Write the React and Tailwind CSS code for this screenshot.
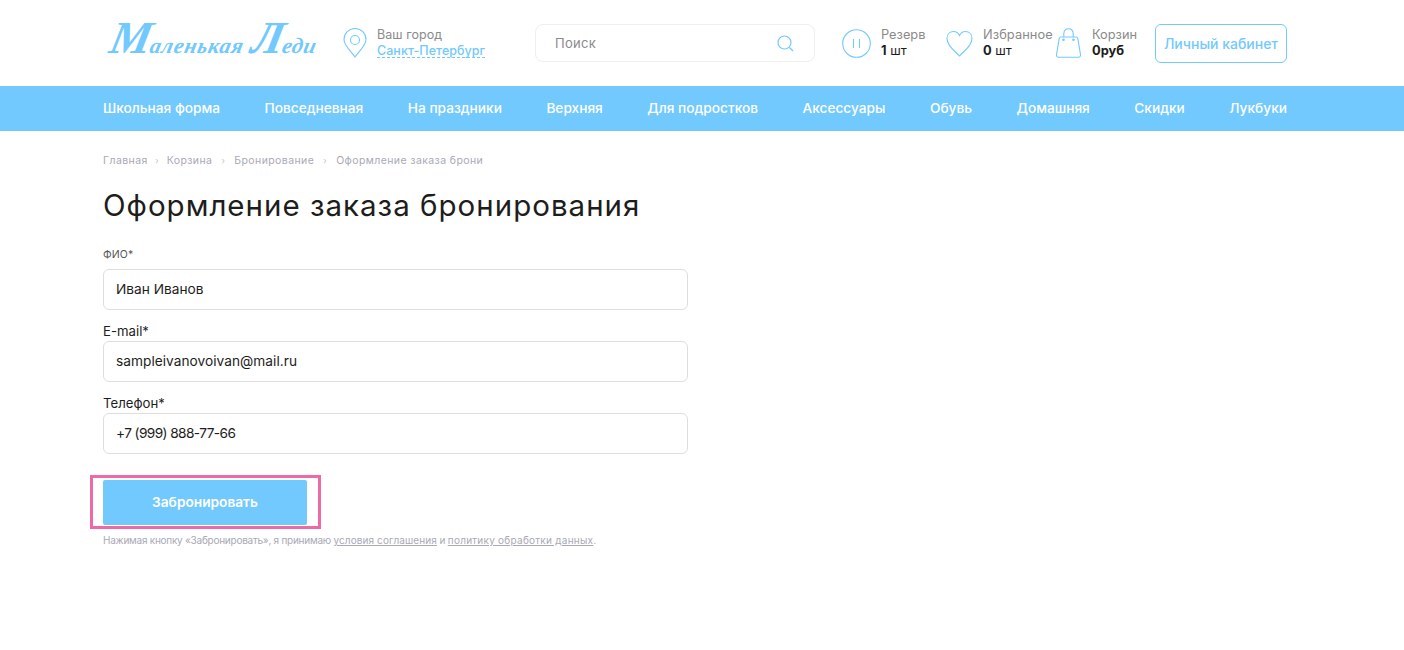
export default function App() {
  const nav = ["Школьная форма","Повседневная","На праздники","Верхняя","Для подростков","Аксессуары","Обувь","Домашняя","Скидки","Лукбуки"];
  const crumbs = ["Главная","Корзина","Бронирование","Оформление заказа брони"];
  const fields = [
    { label: "E-mail*", value: "sampleivanovoivan@mail.ru", track: "tracking-[0.03px]" },
    { label: "Телефон*", value: "+7 (999) 888-77-66", track: "tracking-[-0.6px]" },
  ];
  return (
    <div className="min-h-[650px] bg-white font-['Inter','Noto_Sans',sans-serif] text-[#1d1d1b]">
      <header className="h-[86px] w-[1184px] mx-[103px] flex items-center relative">
        <div className="w-[240px] pl-[7px] flex items-center">
          <span className="inline-block font-['Liberation_Serif',serif] italic text-[#72c9fd] font-bold whitespace-nowrap -skew-x-12 leading-[40px]">
            <span className="text-[46px]">М</span>
            <span className="text-[22px] tracking-[0.8px]">аленькая</span>
            <span className="text-[46px] ml-[7px]">Л</span>
            <span className="text-[22px] tracking-[0.6px]">еди</span>
          </span>
        </div>
        <svg className="w-[24px] h-[30px] shrink-0" viewBox="0 0 24 30" fill="none" stroke="#72c9fd" strokeWidth="1.1">
          <path d="M12 29 C9 24 1 18 1 11.5 A11 11 0 0 1 23 11.5 C23 18 15 24 12 29 Z" />
          <circle cx="12" cy="12" r="4.5" />
        </svg>
        <div className="ml-[10px] w-[158px] pt-[3px] pb-[1px] text-[12.5px] tracking-[0.05px]">
          <div className="text-[#8a8a8a] leading-[18px]">Ваш город</div>
          <div className="inline-block align-top text-[#72c9fd] font-medium leading-[13px] border-b border-dashed border-[#72c9fd]">Санкт-Петербург</div>
        </div>
        <div className="w-[280px] h-[38px] rounded-[8px] border border-[#efefef] flex items-center justify-between pl-[19px] pr-[20px] text-[13px] text-[#8a8a8a] tracking-[0.3px]">
          <span className="pt-[2px]">Поиск</span>
          <svg className="w-[17px] h-[17px]" viewBox="0 0 17 17" fill="none" stroke="#72c9fd" strokeWidth="1.2">
            <circle cx="7.5" cy="7.5" r="6.5" />
            <path d="M12.5 12.5 L16 16" />
          </svg>
        </div>
        <svg className="ml-[27px] w-[29px] h-[29px] shrink-0" viewBox="0 0 29 29" fill="none" stroke="#72c9fd" strokeWidth="1.1">
          <circle cx="14.5" cy="14.5" r="13.8" />
          <path d="M11.5 10 V19 M17.5 10 V19" />
        </svg>
        <div className="ml-[10px] w-[65px] text-[12.8px] leading-[16px]">
          <div className="text-[#8a8a8a]">Резерв</div>
          <div><b className="font-bold">1</b> шт</div>
        </div>
        <svg className="w-[27px] h-[27px] shrink-0" viewBox="0 0 27 27" fill="none" stroke="#72c9fd" strokeWidth="1.1">
          <path d="M13.5 26 C9 21 1 16 1 8.5 C1 4 4 1.5 7.5 1.5 C10 1.5 12.3 3 13.5 5.5 C14.7 3 17 1.5 19.5 1.5 C23 1.5 26 4 26 8.5 C26 16 18 21 13.5 26 Z" />
        </svg>
        <div className="ml-[10px] w-[73px] text-[12.8px] leading-[16px]">
          <div className="text-[#8a8a8a] whitespace-nowrap tracking-[0.1px]">Избранное</div>
          <div><b className="font-bold">0</b> шт</div>
        </div>
        <svg className="w-[25px] h-[30px] shrink-0" viewBox="0 0 25 30" fill="none" stroke="#72c9fd" strokeWidth="1.1">
          <path d="M5 9 H20 C21 9 21.6 9.6 21.8 10.6 L24.5 26.5 C24.7 28.2 23.7 29.3 22.5 29.3 H2.5 C1.3 29.3 0.3 28.2 0.5 26.5 L3.2 10.6 C3.4 9.6 4 9 5 9 Z" />
          <path d="M7.8 9 V6 C7.8 2.8 9.8 0.7 12.5 0.7 C15.2 0.7 17.2 2.8 17.2 6 V9" />
          <circle cx="7.5" cy="11.8" r="1.3" fill="#72c9fd" stroke="none" />
          <circle cx="17.5" cy="11.8" r="1.3" fill="#72c9fd" stroke="none" />
        </svg>
        <div className="ml-[11px] w-[63px] text-[12.8px] leading-[16px]">
          <div className="text-[#8a8a8a]">Корзин</div>
          <div className="font-bold">0руб</div>
        </div>
        <div className="w-[132px] h-[39px] rounded-[6px] border border-[#72c9fd] flex items-center justify-center text-[14px] font-medium text-[#72c9fd] whitespace-nowrap">Личный кабинет</div>
      </header>
      <nav className="h-[45px] bg-[#72c9fd] px-[103px] flex items-center">
        <div className="w-[1184px] flex items-center justify-between text-[13.7px] font-medium text-white whitespace-nowrap">
          {nav.map((n) => <span key={n}>{n}</span>)}
        </div>
      </nav>
      <main className="ml-[103px] w-[585px] relative">
        <div className="pt-[23px] h-[53px] flex items-start text-[10.5px] tracking-[0.4px] leading-[14px] text-[#a9a9b5] whitespace-nowrap">
          {crumbs.map((c, i) => (
            <span key={c} className="flex items-center">
              {i === 1 && <span className="w-[19px] text-center text-[9px] text-[#c5c5cd]">›</span>}
              {i > 1 && <span className="w-[22px] text-center text-[9px] text-[#c5c5cd]">›</span>}
              {c}
            </span>
          ))}
        </div>
        <h1 className="text-[29.5px] leading-[42px] font-normal whitespace-nowrap tracking-[1px]">Оформление заказа бронирования</h1>
        <div className="pt-[22px] h-[43px] text-[10.5px] tracking-[0.1px] leading-[13px] text-[#555]">ФИО*</div>
        <div className="h-[41px] rounded-[6px] border border-[#dedede] flex items-center pl-[12px] text-[13.7px]">Иван Иванов</div>
        {fields.map((f) => (
          <div key={f.label}>
            <div className="h-[31px] pt-[13px] text-[13.2px] leading-[17px]">{f.label}</div>
            <div className={`h-[41px] rounded-[6px] border border-[#dedede] flex items-center pl-[12px] text-[13.7px] ${f.track}`}>{f.value}</div>
          </div>
        ))}
        <div className="relative mt-[26px] w-[204px] h-[45px]">
          <button className="w-full h-full rounded-[2px] bg-[#72c9fd] text-white text-[13.7px] font-semibold">Забронировать</button>
          <div className="absolute left-[-13px] top-[-5px] w-[231px] h-[54px] border-[3px] border-[#ee6aa7]"></div>
        </div>
        <p className="mt-[9px] text-[10px] leading-[13px] text-[#a9a9b5] whitespace-nowrap tracking-[-0.25px]">
          Нажимая кнопку «Забронировать», я принимаю <span className="underline tracking-[0.1px]">условия соглашения</span> и <span className="underline tracking-[0.25px]">политику обработки данных</span>.
        </p>
      </main>
    </div>
  );
}
